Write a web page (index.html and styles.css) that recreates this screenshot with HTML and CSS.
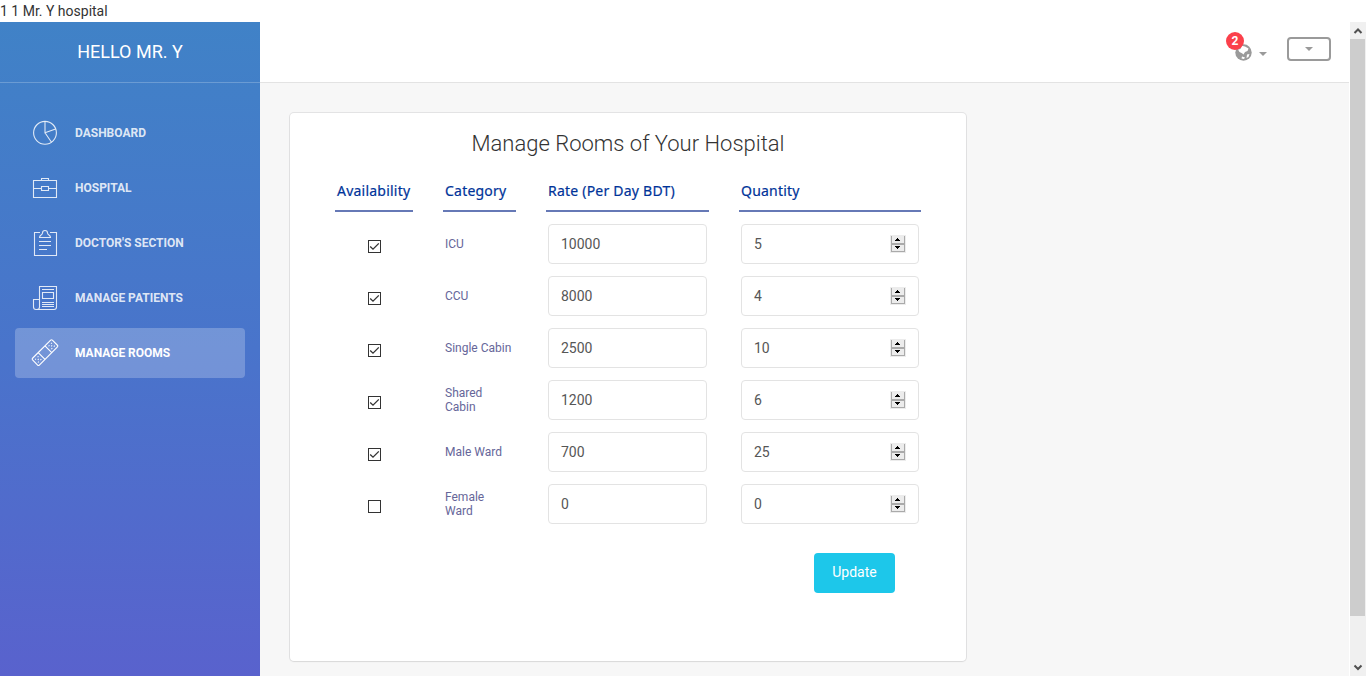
FILE: index.html
```html
<!DOCTYPE html>
<html lang="en">
<head>
<meta charset="utf-8">
<title>Manage Rooms</title>
<link rel="stylesheet" href="styles.css">
</head>
<body>
<svg class="defs" width="0" height="0" aria-hidden="true">
  <symbol id="check" viewBox="0 0 13 13"><path d="M2.2 6.500 5 9.200 10.800 3.400" fill="none" stroke="#333" stroke-width="1.300"/></symbol>
  <symbol id="spin" viewBox="0 0 16 18">
    <path d="M0 0h16v18H0z" fill="#ececec"/>
    <path d="M1 1h1v16H1zM14 1h1v16h-1zM1 8h14v2H1zM1 16h14v1H1z" fill="#aaa"/>
    <path d="M7 3h1v1h1v1h1v1H5V5h1V4h1zM5 11h5v1H9v1H8v1H7v-1H6v-1H5z" fill="#000"/>
  </symbol>
</svg>
<div class="debug">1 1 Mr. Y hospital</div>
<div class="wrapper">
  <aside class="sidebar">
    <div class="logo">HELLO MR. Y</div>
    <nav class="nav">
      <a class="item"><svg class="icon" viewBox="0 0 28 28"><circle cx="14" cy="13.800" r="11.400"/><path d="M14 2.400v11.400l10.600-3.800M14 13.800l6.500 9.400"/></svg>DASHBOARD</a>
      <a class="item"><svg class="icon" viewBox="0 0 28 28"><path d="M2.500 6.500h23v17h-23zM10.500 6.500v-2h7v2M2.500 14.500h8M17.500 14.500h8M10.500 12.500h7v4h-7z"/></svg>HOSPITAL</a>
      <a class="item"><svg class="icon" viewBox="0 0 28 28"><path d="M9 3.500H3.500v23h22v-23H19M8.500 8.500c0-3 3-2 3-4.500a2.500 2.500 0 0 1 5 0c0 2.500 3 1.500 3 4.500zM8 12.500h12M8 16.500h12M8 20.500h8"/></svg>DOCTOR'S SECTION</a>
      <a class="item"><svg class="icon" viewBox="0 0 28 28"><path d="M8.500 23V2.500h17V23c0 2-1 2.500-2.500 2.500H5c-2 0-2.500-1-2.500-2.500v-7.500h6M8.500 23c0 1.500-1 2.500-2.500 2.500M11 5.500h12M11.500 8.500h11v6h-11zM11 18.500h12M11 20.500h12M11 22.500h12"/></svg>MANAGE PATIENTS</a>
      <a class="item active"><svg class="icon" viewBox="0 0 28 28"><g transform="translate(0 -.4) rotate(-45 14 14)"><rect x="0" y="9.200" width="28" height="9.600" rx="1.200"/><path d="M9.200 9.200v9.600M18.800 9.200v9.600"/><path class="dots" d="M2 12h1.300M5.500 12h1.300M3.800 14h1.300M2 16h1.300M5.500 16h1.300M21 12h1.300M24.500 12h1.300M22.800 14h1.300M21 16h1.300M24.500 16h1.300"/></g></svg>MANAGE ROOMS</a>
    </nav>
  </aside>
  <main class="main">
    <header class="topbar">
      <div class="notify">
        <svg class="globe" viewBox="0 0 17 17"><circle cx="8.500" cy="8.500" r="8.200" fill="#9a9a9a"/><path d="M6.500 1.800 10 2.500 13.500 4.500 12.500 7 10 8 8.500 10.500 7 9.200 4.500 8 3 5.500 5.500 5zM12 10.500l2.500-.5-1 3-2 1zM7 12.500l3 1-1 1.500-2.500-.5z" fill="#fff"/></svg>
        <span class="badge">2</span>
        <span class="caret"></span>
      </div>
      <button class="toggle"><span class="caret"></span></button>
    </header>
    <section class="content">
      <form class="card">
        <h1 class="title">Manage Rooms of Your Hospital</h1>
        <div class="rooms">
          <div class="head">Availability</div><div class="head">Category</div><div class="head">Rate (Per Day BDT)</div><div class="head">Quantity</div>

          <span class="box"><svg><use href="#check"/></svg></span><span class="cat">ICU</span><div class="field">10000</div><div class="field">5<svg class="spin"><use href="#spin"/></svg></div>

          <span class="box"><svg><use href="#check"/></svg></span><span class="cat">CCU</span><div class="field">8000</div><div class="field">4<svg class="spin"><use href="#spin"/></svg></div>

          <span class="box"><svg><use href="#check"/></svg></span><span class="cat">Single Cabin</span><div class="field">2500</div><div class="field">10<svg class="spin"><use href="#spin"/></svg></div>

          <span class="box"><svg><use href="#check"/></svg></span><span class="cat">Shared<br>Cabin</span><div class="field">1200</div><div class="field">6<svg class="spin"><use href="#spin"/></svg></div>

          <span class="box"><svg><use href="#check"/></svg></span><span class="cat">Male Ward</span><div class="field">700</div><div class="field">25<svg class="spin"><use href="#spin"/></svg></div>

          <span class="box"></span><span class="cat">Female<br>Ward</span><div class="field">0</div><div class="field">0<svg class="spin"><use href="#spin"/></svg></div>
        </div>
        <button class="update" type="button">Update</button>
      </form>
    </section>
  </main>
  <div class="scrollbar">
    <svg class="arrow" viewBox="0 0 16 17"><path d="M4.500 11 8 7.500l3.500 3.500" /></svg>
    <div class="thumb"></div>
    <svg class="arrow" viewBox="0 0 16 17"><path d="M4.500 6.500 8 10l3.500-3.500" /></svg>
  </div>
</div>
</body>
</html>
```

FILE: styles.css
```css
* { box-sizing: border-box; }
body {
  margin: 0;
  height: 676px;
  overflow: hidden;
  display: flex;
  flex-direction: column;
  font-family: Roboto, "Liberation Sans", sans-serif;
  font-size: 14px;
  color: #333;
  background: #fff;
}
.defs { position: absolute; }
.debug { height: 22px; line-height: 22px; flex: none; }
.wrapper { display: flex; flex: 1; min-height: 0; }

.sidebar {
  width: 260px;
  background: linear-gradient(#4082c7, #4974cb 50%, #5962cd);
  color: #fff;
}
.logo {
  height: 61px;
  border-bottom: 1px solid rgba(255, 255, 255, .22);
  line-height: 60px;
  text-align: center;
  font-size: 18px;
}
.nav { padding: 25px 15px 0; display: flex; flex-direction: column; gap: 5px; }
.item {
  height: 50px;
  padding-left: 16px;
  display: flex;
  align-items: center;
  gap: 16px;
  border-radius: 4px;
  font-size: 12px;
  font-weight: 700;
  color: rgba(255, 255, 255, .84);
}
.item.active { background: rgba(255, 255, 255, .23); color: #fff; }
.icon {
  width: 28px;
  height: 28px;
  overflow: visible;
  fill: none;
  stroke: currentColor;
  stroke-width: 1.1;
}
.icon .dots { stroke-width: 1; }

.main { flex: 1; display: flex; flex-direction: column; min-width: 0; }
.topbar {
  height: 61px;
  flex: none;
  border-bottom: 1px solid #e3e3e3;
  display: flex;
  justify-content: flex-end;
  align-items: flex-start;
  gap: 20px;
  padding: 15px 18px 0 0;
}
.notify { position: relative; display: flex; align-items: center; gap: 7px; padding-top: 7px; }
.globe { width: 17px; height: 17px; }
.notify .caret { margin-top: 2px; }
.badge {
  position: absolute;
  left: -9px;
  top: -5px;
  width: 18px;
  height: 18px;
  border-radius: 50%;
  background: #fb404b;
  color: #fff;
  font-size: 12px;
  font-weight: 700;
  line-height: 18px;
  text-align: center;
}
.caret { border: 4px solid transparent; border-top-color: #9a9a9a; border-bottom: 0; }
.toggle {
  width: 44px;
  height: 24px;
  padding: 0;
  display: flex;
  align-items: center;
  justify-content: center;
  border: 2px solid #9a9a9a;
  border-radius: 4px;
  background: transparent;
}
.content { flex: 1; padding: 30px; background: #f7f7f7; }
.card {
  width: 676px;
  height: 548px;
  padding: 15px 45px 0;
  border-radius: 4px;
  background: #fff;
  box-shadow: 0 1px 2px rgba(0, 0, 0, .05), 0 0 0 1px rgba(63, 63, 68, .1);
}
.title {
  margin: 0;
  text-align: center;
  font-size: 22px;
  font-weight: 300;
  line-height: 31px;
}
.rooms {
  margin-top: 12px;
  display: grid;
  grid-template-columns: 78px 73px 163px 182px;
  grid-template-rows: 41px;
  grid-auto-rows: 40px;
  gap: 12px 30px;
}
.head {
  padding-left: 2px;
  border-bottom: 2px solid #6679b6;
  font-family: "Noto Sans", "Open Sans", sans-serif;
  font-size: 14px;
  font-weight: 400;
  letter-spacing: .22px;
  line-height: 40px;
  color: #039;
  -webkit-text-stroke: .2px #039;
  white-space: nowrap;
}
.box {
  width: 13px;
  height: 13px;
  margin: 5px 0 0 33px;
  align-self: center;
  border: 1px solid #333;
  display: flex;
}
.box svg { width: 13px; height: 13px; margin: -1px; flex: none; }
.cat {
  align-self: center;
  padding-left: 2px;
  font-size: 12px;
  line-height: 14px;
  color: #669;
  white-space: nowrap;
}
.field {
  margin: 0 2px;
  padding: 0 12px;
  display: flex;
  align-items: center;
  justify-content: space-between;
  border: 1px solid #e3e3e3;
  border-radius: 4px;
  color: #565656;
}
.spin { width: 16px; height: 18px; }
.update {
  display: block;
  width: 81px;
  height: 40px;
  margin: 29px 26px 0 auto;
  padding: 0 0 2px;
  border: 0;
  border-radius: 4px;
  background: #1dc7ea;
  color: #fff;
  font: 14px Roboto, sans-serif;
}

.scrollbar {
  width: 17px;
  padding-right: 1px;
  border-left: 1px solid #fff;
  background: #f0f0f0;
  display: flex;
  flex-direction: column;
}
.arrow { width: 16px; height: 17px; fill: none; stroke: #505050; stroke-width: 2; }
.thumb { height: 577px; margin-bottom: auto; background: #cdcdcd; }
```
